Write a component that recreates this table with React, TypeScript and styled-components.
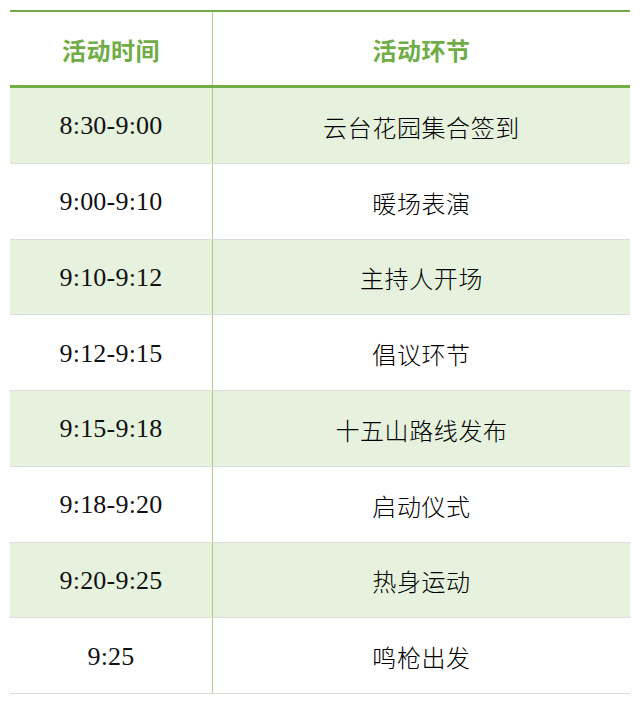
import React from "react";
import styled, { createGlobalStyle } from "styled-components";

const GlobalStyle = createGlobalStyle`
  html, body {
    margin: 0;
    padding: 0;
    background: #ffffff;
  }
`;

const Page = styled.div`
  padding: 10px 10px 0 10px;
  width: 640px;
  box-sizing: border-box;
`;

const Table = styled.div`
  display: flex;
  flex-direction: column;
  border-top: 2px solid #70ad47;
`;

const HeaderRow = styled.div`
  display: grid;
  grid-template-columns: 203px 1fr;
  height: 73px;
  border-bottom: 3px solid #70ad47;
`;

const Row = styled.div<{ $shaded: boolean }>`
  display: grid;
  grid-template-columns: 203px 1fr;
  height: 74.75px;
  background: ${(p) => (p.$shaded ? "#e6f2dd" : "#ffffff")};
  border-bottom: 1px solid #dcdcdc;
`;

const Cell = styled.div<{ $first?: boolean }>`
  display: flex;
  align-items: center;
  justify-content: center;
  padding-top: 2px;
  border-right: ${(p) => (p.$first ? "1px solid #a9d18e" : "none")};
`;

const HeadText = styled.span`
  font-family: "Noto Sans CJK SC", "Noto Sans", sans-serif;
  font-weight: 700;
  font-size: 24px;
  letter-spacing: 0.5px;
  color: #70ad47;
`;

const TimeText = styled.span`
  font-family: "Liberation Serif", "DejaVu Serif", serif;
  font-size: 26px;
  letter-spacing: 0.2px;
  color: #111111;
`;

const StepText = styled.span`
  font-family: "Noto Sans CJK SC", sans-serif;
  font-weight: 300;
  font-size: 24px;
  letter-spacing: 0.6px;
  color: #000000;
`;

const schedule = [
  { time: "8:30-9:00", step: "云台花园集合签到" },
  { time: "9:00-9:10", step: "暖场表演" },
  { time: "9:10-9:12", step: "主持人开场" },
  { time: "9:12-9:15", step: "倡议环节" },
  { time: "9:15-9:18", step: "十五山路线发布" },
  { time: "9:18-9:20", step: "启动仪式" },
  { time: "9:20-9:25", step: "热身运动" },
  { time: "9:25", step: "鸣枪出发" },
];

const App: React.FunctionComponent = () => {
  return (
    <Page>
      <GlobalStyle />
      <Table>
        <HeaderRow>
          <Cell $first>
            <HeadText>活动时间</HeadText>
          </Cell>
          <Cell>
            <HeadText>活动环节</HeadText>
          </Cell>
        </HeaderRow>
        {schedule.map((item, i) => (
          <Row key={item.time} $shaded={i % 2 === 0}>
            <Cell $first>
              <TimeText>{item.time}</TimeText>
            </Cell>
            <Cell>
              <StepText>{item.step}</StepText>
            </Cell>
          </Row>
        ))}
      </Table>
    </Page>
  );
};

export default App;
